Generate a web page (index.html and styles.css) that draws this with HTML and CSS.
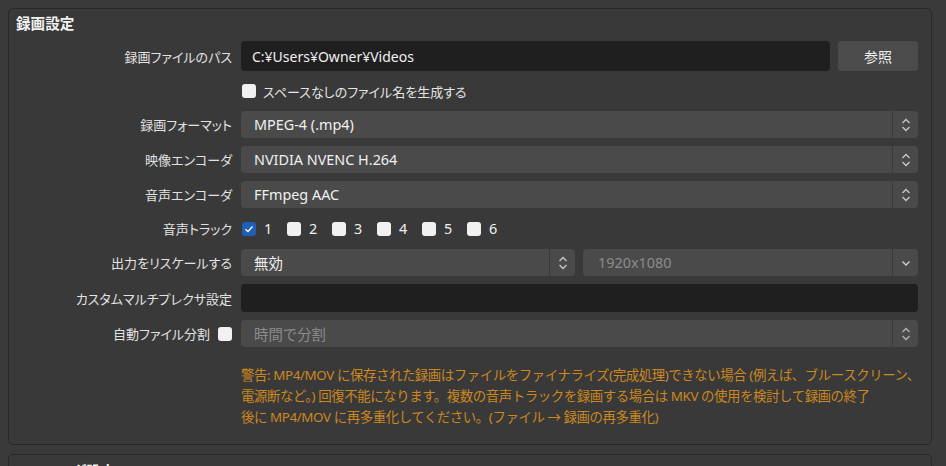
FILE: index.html
```html
<!DOCTYPE html>
<html lang="ja">
<head>
<meta charset="utf-8">
<title>録画設定</title>
<link rel="stylesheet" href="styles.css">
</head>
<body>
<div class="page">
  <div class="main">
    <section class="group">
      <div class="group-title">録画設定</div>
      <div class="form">
        <div class="lbl">録画ファイルのパス</div>
        <div class="field path-row">
          <div class="input">C:¥Users¥Owner¥Videos</div>
          <button class="btn">参照</button>
        </div>

        <div class="lbl"></div>
        <div class="field check-row">
          <span class="cb"></span><span class="cb-text">スペースなしのファイル名を生成する</span>
        </div>

        <div class="lbl">録画フォーマット</div>
        <div class="field combo"><span class="combo-text">MPEG-4 (.mp4)</span><span class="arrows"><svg width="10" height="16" viewBox="0 0 10 16"><path d="M1.5 6 5 2.5 8.5 6M1.5 10 5 13.5 8.5 10" fill="none" stroke="#c9c9c9" stroke-width="1.3"/></svg></span></div>

        <div class="lbl">映像エンコーダ</div>
        <div class="field combo"><span class="combo-text">NVIDIA NVENC H.264</span><span class="arrows"><svg width="10" height="16" viewBox="0 0 10 16"><path d="M1.5 6 5 2.5 8.5 6M1.5 10 5 13.5 8.5 10" fill="none" stroke="#c9c9c9" stroke-width="1.3"/></svg></span></div>

        <div class="lbl">音声エンコーダ</div>
        <div class="field combo"><span class="combo-text">FFmpeg AAC</span><span class="arrows"><svg width="10" height="16" viewBox="0 0 10 16"><path d="M1.5 6 5 2.5 8.5 6M1.5 10 5 13.5 8.5 10" fill="none" stroke="#c9c9c9" stroke-width="1.3"/></svg></span></div>

        <div class="lbl">音声トラック</div>
        <div class="field tracks">
          <span class="track"><span class="cb checked"><svg width="14" height="14" viewBox="0 0 14 14"><path d="M3.5 7.2 6 9.5 10.5 4.5" fill="none" stroke="#fff" stroke-width="1.3"/></svg></span><span class="num">1</span></span>
          <span class="track"><span class="cb"></span><span class="num">2</span></span>
          <span class="track"><span class="cb"></span><span class="num">3</span></span>
          <span class="track"><span class="cb"></span><span class="num">4</span></span>
          <span class="track"><span class="cb"></span><span class="num">5</span></span>
          <span class="track"><span class="cb"></span><span class="num">6</span></span>
        </div>

        <div class="lbl">出力をリスケールする</div>
        <div class="field split">
          <div class="combo"><span class="combo-text">無効</span><span class="arrows"><svg width="10" height="16" viewBox="0 0 10 16"><path d="M1.5 6 5 2.5 8.5 6M1.5 10 5 13.5 8.5 10" fill="none" stroke="#c9c9c9" stroke-width="1.3"/></svg></span></div>
          <div class="combo disabled"><span class="combo-text res">1920x1080</span><span class="arrows"><svg width="10" height="16" viewBox="0 0 10 16"><path d="M1.5 6.5 5 10 8.5 6.5" fill="none" stroke="#d4d4d4" stroke-width="1.3"/></svg></span></div>
        </div>

        <div class="lbl">カスタムマルチプレクサ設定</div>
        <div class="field input mux"></div>

        <div class="lbl lbl-check">自動ファイル分割<span class="cb"></span></div>
        <div class="field combo disabled"><span class="combo-text">時間で分割</span><span class="arrows"><svg width="10" height="16" viewBox="0 0 10 16"><path d="M1.5 6 5 2.5 8.5 6M1.5 10 5 13.5 8.5 10" fill="none" stroke="#b5b5b5" stroke-width="1.3"/></svg></span></div>
      </div>
      <p class="warning">警告: MP4/MOV に保存された録画はファイルをファイナライズ(完成処理)できない場合 (例えば、ブルースクリーン、<br>電源断など。) 回復不能になります。複数の音声トラックを録画する場合は MKV の使用を検討して録画の終了<br>後に MP4/MOV に再多重化してください。(ファイル → 録画の再多重化)</p>
    </section>
    <section class="group group-next">
      <div class="group-title">エンコーダ設定</div>
    </section>
  </div>
  <div class="scrollbar"></div>
</div>
</body>
</html>
```
FILE: styles.css
```css
* { box-sizing: border-box; }
html, body {
  margin: 0;
  height: 466px;
  overflow: hidden;
  background: #3a3a3a;
}
body {
  font-family: "Noto Sans", "Noto Sans CJK JP", sans-serif;
  font-size: 14.4px;
  color: #e4e4e4;
}
.page {
  display: flex;
  height: 466px;
}
.main {
  flex: 1;
  padding: 8px 14px 0 8px;
}
.scrollbar {
  width: 2px;
  background: #474747;
}
.group {
  border: 1px solid #282828;
  border-radius: 5px;
  background: #393939;
}
.group-title {
  height: 32px;
  padding: 4px 7px 0;
  line-height: 20px;
  font-size: 14.6px;
  font-weight: bold;
  color: #f2f2f2;
  font-feature-settings: "palt";
}
.form {
  display: grid;
  grid-template-columns: 223px 677px;
  grid-template-rows: 30px 24px 27px 27px 27px 25px 27px 28px 27px;
  column-gap: 9px;
  row-gap: 8px;
}
.lbl {
  display: flex;
  align-items: center;
  justify-content: flex-end;
  white-space: nowrap;
  color: #e2e2e2;
  font-size: 13px;
  font-feature-settings: "palt";
}
.lbl-check { gap: 8px; }
.field { display: flex; align-items: center; }
.path-row { gap: 8px; }
.input {
  background: #1f1f1f;
  border-radius: 4px;
  height: 100%;
  display: flex;
  align-items: center;
  padding-left: 11px;
  color: #f0f0f0;
  font-size: 14px;
}
.path-row .input { flex: 1; }
.btn {
  width: 80px;
  height: 100%;
  border: none;
  border-radius: 4px;
  background: #4b4b4b;
  color: #f0f0f0;
  font: inherit;
  font-size: 14px;
  padding: 0;
}
.cb {
  width: 14px;
  height: 14px;
  border-radius: 3px;
  background: #f1f1f1;
  flex: none;
  display: inline-flex;
}
.cb.checked { background: #1e5fb8; }
.check-row { gap: 7px; padding-left: 1px; }
.cb-text { font-size: 13px; font-feature-settings: "palt"; }
.combo {
  display: flex;
  align-items: center;
  background: #4a4a4a;
  border-radius: 4px;
  height: 100%;
}
.combo-text {
  flex: 1;
  padding-left: 13px;
  color: #f0f0f0;
  white-space: nowrap;
}
.arrows {
  width: 26px;
  height: 100%;
  border-left: 1px solid #3a3a3a;
  display: flex;
  align-items: center;
  justify-content: center;
}
.disabled .combo-text { color: #8c8c8c; }
.combo-text.res { padding-left: 15px; }
.tracks { gap: 0; padding-left: 1px; }
.track {
  display: inline-flex;
  align-items: center;
  width: 45px;
  gap: 8px;
}
.num { color: #f0f0f0; }
.split {
  display: grid;
  grid-template-columns: 334px 335px;
  column-gap: 8px;
}
.mux { padding: 0; }
.warning {
  margin: 18px 11px 16px 232px;
  color: #cc881e;
  font-size: 13.4px;
  letter-spacing: -0.4px;
  line-height: 21px;
  white-space: nowrap;
}
.group-next {
  margin-top: 9px;
  height: 40px;
}
.group-next .group-title { padding-top: 6px; }
```
